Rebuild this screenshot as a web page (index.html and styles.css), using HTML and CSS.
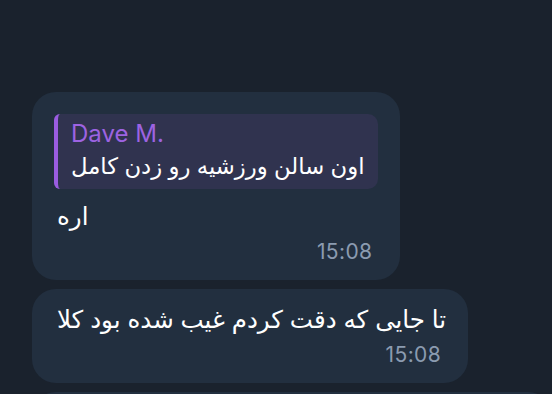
FILE: index.html
```html
<!DOCTYPE html>
<html lang="fa">
<head>
    <meta charset="UTF-8">
    <meta name="viewport" content="width=device-width, initial-scale=1.0">
    <title>Chat</title>
    <link rel="stylesheet" href="styles.css">
</head>
<body>
    <div class="chat">
        <div class="bubble">
            <div class="reply">
                <div class="reply-name">Dave M.</div>
                <div class="reply-text" dir="rtl">اون سالن ورزشیه رو زدن کامل</div>
            </div>
            <div class="text"><span dir="rtl">اره</span></div>
            <div class="time">15:08</div>
        </div>

        <div class="bubble">
            <div class="text"><span dir="rtl">تا جایی که دقت کردم غیب شده بود کلا</span></div>
            <div class="time">15:08</div>
        </div>

        <div class="bubble next"></div>
    </div>
</body>
</html>
```

FILE: styles.css
```css
* {
    margin: 0;
    padding: 0;
    box-sizing: border-box;
}

body {
    background-color: #1a222d;
    font-family: Inter, "DejaVu Sans", sans-serif;
    color: #ffffff;
    overflow: hidden;
    height: 394px;
}

.chat {
    display: flex;
    flex-direction: column;
    align-items: flex-start;
    gap: 9px;
    padding: 92px 0 0 32px;
    height: 394px;
    overflow: hidden;
}

.bubble {
    background-color: #222f3f;
    border-radius: 24px;
    padding: 14px 22px 15px 22px;
}

.reply {
    background-color: #30334f;
    border-left: 4px solid #9a5ce0;
    border-radius: 6px 10px 10px 6px;
    padding: 6px 13px 5px 13px;
    margin: 8px 0 11px 0;
}

.reply-name {
    color: #9d63e2;
    font-size: 24px;
    line-height: 28px;
}

.reply-text {
    font-size: 22.7px;
    line-height: 36px;
    text-align: left;
}

.text {
    font-size: 24.5px;
    line-height: 32px;
    padding-left: 3px;
}

.time {
    color: #8b9bb0;
    font-size: 21px;
    letter-spacing: 0.4px;
    line-height: 26px;
    text-align: right;
    padding-right: 5px;
    margin-top: 7px;
}

.next {
    width: 520px;
    height: 60px;
    flex-shrink: 0;
    padding: 0;
}
```
